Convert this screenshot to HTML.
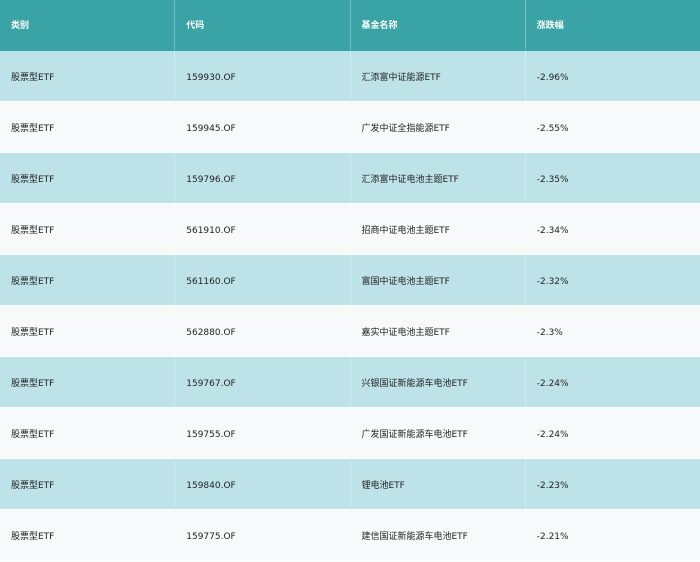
<!DOCTYPE html>
<html><head><meta charset="utf-8"><style>
body{margin:0;width:700px;height:560px;overflow:hidden;background:#f7f9fb;font-family:"DejaVu Sans","Noto Sans CJK SC",sans-serif;font-size:9px;color:#222}
.row{display:flex;height:50px;border-bottom:1px solid #fff}
.row div{width:164px;padding-left:11px;padding-top:2px;line-height:50px;height:48px;overflow:visible;white-space:nowrap;border-right:1px solid rgba(255,255,255,.3)}
.row div:last-child{border-right:0}
.h{background:#3aa3a6;color:#fff;font-weight:bold;border-bottom:1px solid #3aa3a6}
.h div{padding-top:1px;height:49px}
.a{background:#bde3e8}
.b{background:#f7f9fb}
</style></head><body>
<div class="row h"><div>类别</div><div>代码</div><div>基金名称</div><div>涨跌幅</div></div>
<div class="row a"><div>股票型ETF</div><div>159930.OF</div><div>汇添富中证能源ETF</div><div>-2.96%</div></div>
<div class="row b"><div>股票型ETF</div><div>159945.OF</div><div>广发中证全指能源ETF</div><div>-2.55%</div></div>
<div class="row a"><div>股票型ETF</div><div>159796.OF</div><div>汇添富中证电池主题ETF</div><div>-2.35%</div></div>
<div class="row b"><div>股票型ETF</div><div>561910.OF</div><div>招商中证电池主题ETF</div><div>-2.34%</div></div>
<div class="row a"><div>股票型ETF</div><div>561160.OF</div><div>富国中证电池主题ETF</div><div>-2.32%</div></div>
<div class="row b"><div>股票型ETF</div><div>562880.OF</div><div>嘉实中证电池主题ETF</div><div>-2.3%</div></div>
<div class="row a"><div>股票型ETF</div><div>159767.OF</div><div>兴银国证新能源车电池ETF</div><div>-2.24%</div></div>
<div class="row b"><div>股票型ETF</div><div>159755.OF</div><div>广发国证新能源车电池ETF</div><div>-2.24%</div></div>
<div class="row a"><div>股票型ETF</div><div>159840.OF</div><div>锂电池ETF</div><div>-2.23%</div></div>
<div class="row b"><div>股票型ETF</div><div>159775.OF</div><div>建信国证新能源车电池ETF</div><div>-2.21%</div></div>
</body></html>
